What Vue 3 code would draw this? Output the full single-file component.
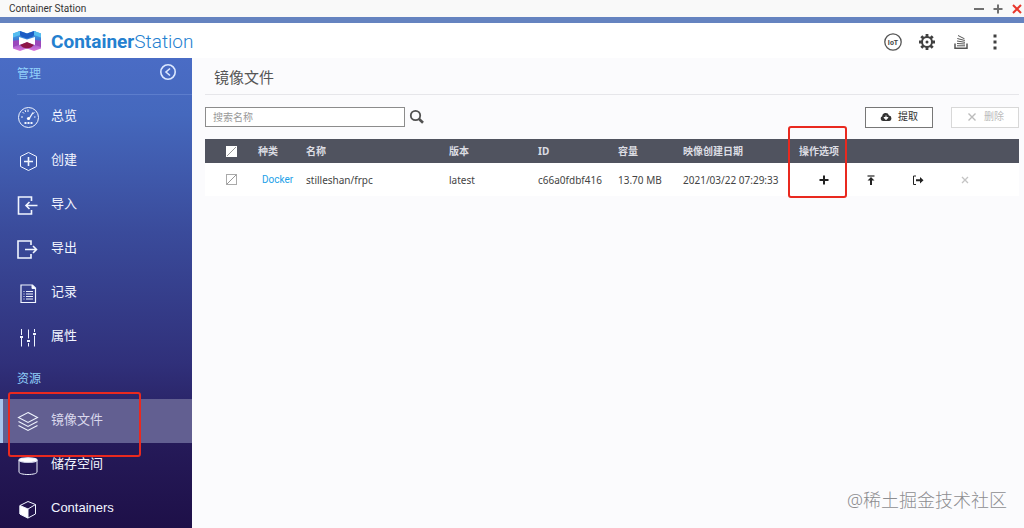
<script setup>
import { ref } from 'vue'

const manage = [
  { id: 'overview', label: '总览' },
  { id: 'create', label: '创建' },
  { id: 'import', label: '导入' },
  { id: 'export', label: '导出' },
  { id: 'log', label: '记录' },
  { id: 'prefs', label: '属性' }
]
const resources = [
  { id: 'images', label: '镜像文件', active: true },
  { id: 'volumes', label: '储存空间' },
  { id: 'containers', label: 'Containers' }
]
const groups = [
  { title: '管理', items: manage },
  { title: '资源', items: resources }
]
const images = [
  { type: 'Docker', name: 'stilleshan/frpc', version: 'latest', id: 'c66a0fdbf416', size: '13.70 MB', created: '2021/03/22 07:29:33' }
]
const query = ref('')
</script>

<template>
  <div class="window">
    <div class="titlebar">
      <span class="title">Container Station</span>
      <div class="controls">
        <button aria-label="最小化"><svg width="12" height="12"><path d="M1 6h10" stroke="#707070" stroke-width="2" /></svg></button>
        <button aria-label="最大化"><svg width="12" height="12"><path d="M1.500 6h9M6 1.500v9" stroke="#707070" stroke-width="2" /></svg></button>
        <button aria-label="关闭"><svg width="12" height="12"><path d="M2 2l8 8M10 2l-8 8" stroke="#e8372c" stroke-width="2" /></svg></button>
      </div>
    </div>

    <header class="header">
      <svg class="logo" width="30" height="22" viewBox="0 0 30 22">
        <defs>
          <linearGradient id="pillar" x1="0" y1="0" x2="0" y2="1">
            <stop offset="0" stop-color="#4fb4ea" />
            <stop offset=".42" stop-color="#3a7fd6" />
            <stop offset=".55" stop-color="#8a58c4" />
            <stop offset="1" stop-color="#dc74dc" />
          </linearGradient>
        </defs>
        <path d="M1 3.500L8 1l7 2.500L22 1l7 2.500v15L22 21l-7-2.500L8 21l-7-2.500z" fill="url(#pillar)" />
        <path d="M8 1l7 2.500L22 1l2 1-3 4.500-6 2-6-2L6 2z" fill="#1d5cc4" />
        <path d="M1 3.500L8 1v4L1 7.500zM29 3.500L22 1v4l7 2.500z" fill="#55bdf0" />
        <path d="M1 11l6-1v5l-6 2zM29 11l-6-1v5l6 2z" fill="#9a48bc" />
        <path d="M7 7l8 2.500L23 7v8l-8-2.500L7 15z" fill="#fff" />
        <path d="M8 15l7-3 7 3-3 2.500-4 1-4-1z" fill="#8e1648" />
      </svg>
      <span class="brand"><b>Container</b>Station</span>
      <div class="tools">
        <button aria-label="IoT">
          <svg width="18" height="18" viewBox="0 0 18 18"><circle cx="9" cy="9" r="8.200" fill="none" stroke="#555" stroke-width="1.300" /><text x="9" y="11.600" text-anchor="middle" class="iot">IoT</text></svg>
        </button>
        <button aria-label="设置">
          <svg width="18" height="18" viewBox="-9 -9 18 18" stroke="#404040" fill="none">
            <circle r="5" stroke-width="2" />
            <path d="M0-8v3M0 5v3M-8 0h3M5 0h3M-5.700-5.700l2 2M3.700 3.700l2 2M-5.700 5.700l2-2M3.700-3.700l2-2" stroke-width="2.800" />
            <circle r="1.500" fill="#404040" stroke="none" />
          </svg>
        </button>
        <button aria-label="任务">
          <svg width="18" height="18" viewBox="0 0 18 18" stroke="#555" fill="none">
            <path d="M3 10.500v4.800h12v-4.800" stroke-width="1.500" />
            <path d="M5 12.800h8M5 10.500l8 .5M5 8l8 1.300M5.300 5.500l7.500 2M6 2.500l6.500 3.300" stroke-width="1" />
          </svg>
        </button>
        <button aria-label="更多">
          <svg width="18" height="18" viewBox="0 0 18 18" fill="#404040"><path d="M7.500 1.500h3v3h-3zM7.500 7.500h3v3h-3zM7.500 13.500h3v3h-3z" /></svg>
        </button>
      </div>
    </header>

    <div class="body">
      <nav class="sidebar">
        <section v-for="(g, i) in groups" :key="g.title">
          <div class="group" :class="{ first: i === 0 }">
            <h2>{{ g.title }}</h2>
            <button v-if="i === 0" aria-label="收起">
              <svg width="18" height="18" viewBox="0 0 18 18" fill="none" stroke="#dce8ff" stroke-width="1.600"><circle cx="9" cy="9" r="7.200" /><path d="M11 5.500L7 9l4 3.500" /></svg>
            </button>
          </div>
          <a v-for="item in g.items" :key="item.id" href="#" class="item" :class="{ active: item.active }">
            <svg width="24" height="24" viewBox="0 0 24 24" fill="none" stroke="#f0f5ff" stroke-width="1.300">
              <template v-if="item.id === 'overview'">
                <circle cx="12.500" cy="12.500" r="10" stroke-width="1" />
                <path d="M5 12h2M6.500 7l1.500 1.500M12 4.500v2.500M9 5l.7 2M19.500 12H18M18.500 7.500l-1.500 1" stroke-width="1" />
                <path d="M17 7.500L13 14" stroke-width="1.300" /><circle cx="12.500" cy="13.500" r="1.600" fill="#fff" stroke="none" />
                <path d="M8.500 18h2M11.500 18h2M14.500 18h2" stroke-width="1.800" />
              </template>
              <template v-else-if="item.id === 'create'">
                <path d="M12.500 3.500l8 4v10l-8 4-8-4v-10z" stroke-width="1" /><path d="M8 12.500h9M12.500 8v9" stroke-width="1.600" />
              </template>
              <template v-else-if="item.id === 'import'">
                <path d="M15.500 8V4h-13v17h13v-4" stroke-width="1.600" /><path d="M21.500 12.500H10M13.500 9L10 12.500l3.500 3.500" stroke-width="1.600" />
              </template>
              <template v-else-if="item.id === 'export'">
                <path d="M15 8V4H2v17h13v-4" stroke-width="1.600" /><path d="M9 12.500h11.500M17 9l3.500 3.500L17 16" stroke-width="1.600" />
              </template>
              <template v-else-if="item.id === 'log'">
                <path d="M5 4h11.500L19.500 7v14.500H5z" stroke-width="1.200" /><path d="M16 4v3.500h3.500z" fill="#fff" stroke-width="1" /><path d="M7.500 10.500h1M10 10.500h7M7.500 13h1M10 13h7M7.500 15.500h1M10 15.500h7M7.500 18h1M10 18h7" stroke-width="1" />
              </template>
              <template v-else-if="item.id === 'prefs'">
                <path d="M5.500 4v6M5.500 13v8.500M12.500 4.500v9M12.500 18v3.500M18.500 4v3M18.500 10.500v11" stroke-width="1" />
                <path d="M4 12h3M11 16h3M17 9h3" stroke-width="2" />
              </template>
              <template v-else-if="item.id === 'images'">
                <path d="M12 3.500l9.500 5-9.500 5-9.500-5zM2.500 12.500l9.500 5 9.500-5M2.500 16.500l9.500 5 9.500-5" stroke-width="1.100" />
              </template>
              <template v-else-if="item.id === 'volumes'">
                <path d="M3 7v12c0 1.500 4 2.500 9 2.500s9-1 9-2.500V7" stroke-width="1" /><ellipse cx="12" cy="7" rx="9" ry="2.200" fill="#fff" />
              </template>
              <template v-else>
                <path d="M4 8.500l8-4 7.500 3v9.500l-7.500 4-8-4z" stroke-width="1" /><path d="M4 8.500l8 3.500v9l-8-4z" fill="#fff" stroke-width="1" /><path d="M12 12l7.500-4.500" stroke-width="1" />
              </template>
            </svg>
            <span>{{ item.label }}</span>
            <i v-if="item.active" class="mark mark-nav"></i>
          </a>
        </section>
      </nav>

      <main class="main">
        <h1>镜像文件</h1>
        <div class="toolbar">
          <input v-model="query" type="text" class="search" placeholder="搜索名称" aria-label="搜索名称">
          <button class="find" aria-label="搜索">
            <svg width="16" height="16" viewBox="0 0 16 16" fill="none" stroke="#505050"><circle cx="6.500" cy="6.500" r="4.700" stroke-width="1.800" /><path d="M9.800 9.800l4.200 4" stroke-width="2.600" /></svg>
          </button>
          <button class="action pull">
            <svg width="12" height="12" viewBox="0 0 12 12"><path d="M3 10a2.500 2.500 0 0 1-.8-4.800A3.500 3.500 0 0 1 9 4.500 2.800 2.800 0 0 1 9.300 10z" fill="#333" /><path d="M6 4.500v3M4 6.500l2 2.200 2-2.200z" fill="#fff" stroke="#fff" stroke-width="1" /></svg>
            <span>提取</span>
          </button>
          <button class="action" disabled>
            <svg width="12" height="12" viewBox="0 0 12 12"><path d="M2.500 2.500l7 7M9.500 2.500l-7 7" stroke="#bbb" stroke-width="1.400" /></svg>
            <span>删除</span>
          </button>
        </div>

        <table>
          <colgroup>
            <col class="c-check"><col class="c-type"><col class="c-name"><col class="c-version"><col class="c-id"><col class="c-size"><col class="c-date"><col>
          </colgroup>
          <thead>
            <tr>
              <th class="check"><input type="checkbox" aria-label="全选"></th>
              <th>种类</th><th>名称</th><th>版本</th><th>ID</th><th>容量</th><th>映像创建日期</th>
              <th class="ops-head">操作选项<i class="mark mark-ops"></i></th>
            </tr>
          </thead>
          <tbody>
            <tr v-for="img in images" :key="img.id">
              <td class="check"><input type="checkbox" :aria-label="img.name"></td>
              <td class="type"><a href="#">{{ img.type }}</a></td>
              <td>{{ img.name }}</td>
              <td>{{ img.version }}</td>
              <td>{{ img.id }}</td>
              <td>{{ img.size }}</td>
              <td>{{ img.created }}</td>
              <td>
                <div class="ops">
                  <button aria-label="创建"><svg width="12" height="12" viewBox="0 0 12 12"><path d="M1.500 6h9M6 1.500v9" stroke="#222" stroke-width="2" /></svg></button>
                  <button aria-label="推送"><svg width="12" height="12" viewBox="0 0 12 12"><path d="M2.500 2h7" stroke="#222" stroke-width="1.200" /><path d="M6 3l3.500 3.500H7V11H5V6.500H2.500z" fill="#222" /></svg></button>
                  <button aria-label="导出"><svg width="12" height="12" viewBox="0 0 12 12"><path d="M4 2H1.500v8.500H4" fill="none" stroke="#222" /><path d="M4 5.200h4V3l3.500 3.200L8 9.500V7.200H4z" fill="#222" /></svg></button>
                  <button aria-label="删除" disabled><svg width="12" height="12" viewBox="0 0 12 12"><path d="M3 3l6 6M9 3L3 9" stroke="#c4c4c4" stroke-width="1.300" /></svg></button>
                </div>
              </td>
            </tr>
          </tbody>
        </table>
        <p class="credit">@稀土掘金技术社区</p>
      </main>
    </div>
  </div>
</template>

<style>
body { margin: 0; }
</style>

<style scoped>
.window { height: 100vh; display: flex; flex-direction: column; overflow: hidden; background: #fbfbfd; color: #444; font-family: "Noto Sans", "Noto Sans CJK SC", sans-serif; font-size: 10px; }
button { padding: 0; border: 0; background: none; color: inherit; font: inherit; display: flex; align-items: center; justify-content: center; }
svg { display: block; flex: none; }
a { color: inherit; text-decoration: none; }
.titlebar { flex: none; display: flex; align-items: center; justify-content: space-between; height: 17px; padding: 0 1px 0 9px; background: #f9f9f9; border-bottom: 6px solid #6583c0; }
.title { font-family: Roboto, sans-serif; font-size: 10px; color: #333; }
.controls { display: flex; gap: 7px; }
.header { flex: none; display: flex; align-items: center; height: 35px; padding: 0 20px 0 12px; background: #fff; }
.brand { margin-left: 9px; padding-top: 2px; font-family: Roboto, sans-serif; font-size: 19px; font-weight: 300; color: #2480cf; }
.brand b { font-weight: 700; }
.tools { margin-left: auto; padding-top: 2px; display: flex; gap: 16px; }
.iot { font: bold 7px Roboto, sans-serif; fill: #444; }
.body { flex: 1; min-height: 0; display: flex; }
.sidebar { flex: none; width: 192px; overflow: hidden; background: linear-gradient(#4a6cc5 0, #4568bd 12%, #3a4b9b 37%, #30307a 65%, #251a59 82%, #1e1048 100%); }
.group { display: flex; align-items: center; justify-content: space-between; height: 40px; padding: 0 15px 0 17px; }
.group.first { height: 36px; padding-bottom: 1px; background: linear-gradient(#5c7dcc, #5c7dcc) 17px 100% / 100% 1px no-repeat; }
.group.first button { margin-bottom: 8px; }
.group.first h2 { margin-bottom: 4px; }
h2 { margin: 0; font-size: 12px; line-height: 16px; font-weight: 400; color: #91d0fa; }
.item { position: relative; display: flex; align-items: center; gap: 11px; height: 44px; padding-left: 16px; font-family: "Liberation Sans", "Noto Sans CJK SC", sans-serif; font-size: 13px; line-height: 16px; color: #f2f5ff; }
.item span { margin-bottom: 2px; }
.item.active { background: #625f91; color: #d9d7ec; box-shadow: inset 3px 0 #a9c5ec; }
.mark { position: absolute; box-sizing: border-box; border: 2px solid #e9291f; border-radius: 3px; pointer-events: none; z-index: 1; }
.mark-nav { left: 8px; top: -7px; width: 133px; height: 65px; }
.mark-ops { left: -11px; top: -13px; width: 59px; height: 72px; }
.main { flex: 1; min-width: 0; display: flex; flex-direction: column; padding: 0 5px 0 13px; }
h1 { margin: 0; padding: 7px 0 5px 9px; font-size: 15px; line-height: 24px; font-weight: 400; color: #555; border-bottom: 1px solid #e6e6ea; }
.toolbar { display: flex; align-items: center; height: 44px; line-height: 14px; }
.search { box-sizing: border-box; width: 200px; height: 20px; padding: 0 7px 1px; border: 1px solid #8c8c8c; background: #fff; font: inherit; color: #444; }
.search::placeholder { color: #999; opacity: 1; }
.find { margin-left: 4px; }
.action { box-sizing: border-box; width: 68px; height: 21px; gap: 6px; border: 1px solid #777; background: #fff; color: #333; }
.action span { margin-bottom: 2px; }
.action.pull { margin: 0 18px 0 auto; }
.action:disabled { border-color: #d8d8d8; color: #bbb; }
table { width: 100%; table-layout: fixed; border-collapse: collapse; background: #fff; line-height: 14px; }
.c-check { width: 53px; }
.c-type { width: 48px; }
.c-name { width: 143px; }
.c-version { width: 89px; }
.c-id { width: 80px; }
.c-size { width: 65px; }
.c-date { width: 116px; }
th, td { padding: 0; text-align: left; white-space: nowrap; }
th { height: 24px; background: #50535f; color: #dcdde3; font-weight: 700; }
td { height: 33px; }
.check { text-align: center; }
.check input { appearance: none; display: block; box-sizing: border-box; width: 11px; height: 11px; margin: 0 auto; border: 1px solid #aaa; background: linear-gradient(135deg, #fff 46%, #999 47%, #999 53%, #fff 54%); }
th.check input { border-color: #fff; }
.type { padding-left: 4px; font-family: Roboto, sans-serif; color: #1c9fe8; }
.ops-head { position: relative; }
.ops { display: flex; padding-left: 1px; }
.ops button { width: 47px; height: 20px; }
.credit { margin: auto 12px 15px auto; font-size: 18px; line-height: 26px; color: #8d8d90; font-weight: 300; }
</style>
